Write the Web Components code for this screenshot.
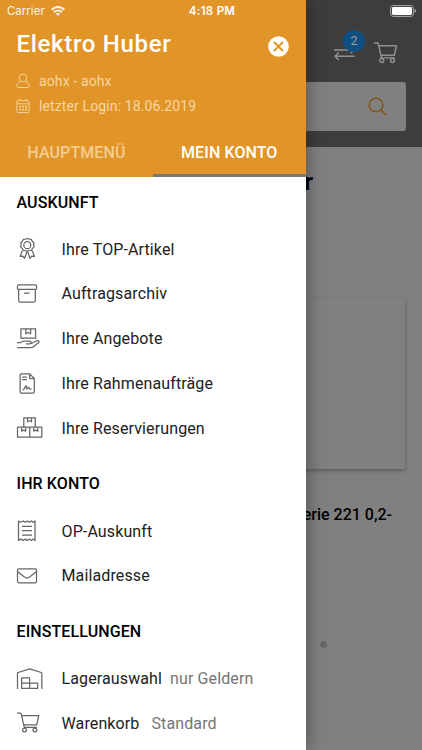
<!DOCTYPE html>
<html lang="de">
<head>
<meta charset="utf-8">
<meta name="viewport" content="width=device-width, initial-scale=1">
<title>Mein Konto</title>
<style>
  body {
    margin: 0;
    overflow: hidden;
    font-family: Roboto, "Liberation Sans", sans-serif;
  }
</style>
</head>
<body>
<account-app></account-app>

<script>
const ICONS = {
  award: `<path d="M10.3 1.5l2 .7 2.1.2.9 1.9 1.6 1.4-.3 2.1.5 2.1-1.6 1.5-1 1.9-2.1.2-2.1.8-2-.8-2.1-.2-1-1.9-1.6-1.5.5-2.1-.3-2.1 1.6-1.4.9-1.9 2.1-.2z"/><circle cx="10.3" cy="8.2" r="3.5"/><path d="M5.3 13.7L3.1 19.4l2.8-.3 1.7 2.2 2.2-6.2M15.3 13.7l2.2 5.7-2.8-.3-1.7 2.2-2.2-6.2"/>`,
  archive: `<rect x=".5" y="2.8" width="19" height="4.6" rx="1"/><path d="M1.7 7.4v11.3q0 1.5 1.5 1.5h13.6q1.5 0 1.5-1.5V7.4M7 11.2h5.5"/>`,
  offer: `<path d="M3.9 1.8h14.7v9.4H3.9zM8.8 1.8v5l2.4-1.3 2.4 1.3v-5"/><path d="M.2 15.6h3.2c1.6-1.2 3-1.6 4.6-1.6h4.6c2 0 2 2.8 0 2.8H9M14.2 16.5l5.5-2.7c1.7-.7 3.2.6 1.7 1.9l-5 4.1c-.8.7-1.5.9-2.5.9H.2"/>`,
  contract: `<path d="M12.7 1.9H4.5q-1.4 0-1.4 1.4v16.5q0 1.4 1.4 1.4h11.4q1.4 0 1.4-1.4V6.5zM12.7 1.9v4.6h4.6M5.3 5h4.6M5.3 7.7h4.6M5.5 17.6h1.2l2.3-4 .9 3.6 1.6-2 1 1.8h2"/>`,
  boxes: `<path d="M6.8 1.9h11.5v9.3H6.8zM.5 11.2h12.3v10H.5zM12.8 11.2h12v10h-12z"/><path d="M10.5 2v3.8l2-1 2 1V2M4.7 11.3v3.8l2-1 2 1v-3.8M16.8 11.3v3.8l2-1 2 1v-3.8"/>`,
  receipt: `<path d="M1.5 2l2.3 1.3L6.2 2l2 1.3L10.3 2l2 1.3 2-1.3 1.8 1.3L18 2v19.4l-1.9-1.3-1.8 1.3-2-1.3-2 1.3-2.1-1.3-2 1.3-2.4-1.3-2.3 1.3zM5 7.3h10M5 11.7h10M5 16h10"/>`,
  mail: `<rect x=".5" y="4.8" width="19" height="14" rx="1.2"/><path d="M.7 7.7l6.7 5.4q2.6 2 5.2 0l6.7-5.4"/>`,
  warehouse: `<path d="M.5 22V6.4q0-.6.6-.9L12.7 1.9l11.5 3.6q.6.3.6.9V22"/><path d="M4.6 10.8h8v5.3h-8zM4.6 16.1h8.1v5.2H4.6zM12.7 16.1h8v5.2h-8z"/>`,
  cart: `<path d="M0 2h3.3q.7 0 .9.8l3.1 13.6h12.6M4.8 4.6h17l-2.1 9.3H6.8"/><circle cx="7.5" cy="18.9" r="1.9"/><circle cx="17.9" cy="18.9" r="1.9"/>`
};

class StatusBar extends HTMLElement {
  constructor() {
    super();
    this.attachShadow({ mode: "open" });
    this.shadowRoot.innerHTML = `
      <style>
        :host {
          display: grid;
          grid-template-columns: 1fr auto 1fr;
          align-items: center;
          height: 22px;
          padding: 0 5px 0 7px;
          color: #fff;
          font: 11.3px/22px Inter, "Liberation Sans", sans-serif;
        }
        .left { display: flex; align-items: center; gap: 6px; opacity: .9; letter-spacing: .1px; }
        .time { font-weight: 600; font-size: 11.5px; letter-spacing: .3px; }
        .battery { justify-self: end; }
        svg { display: block; }
      </style>
      <div class="left">
        <span>Carrier</span>
        <svg width="14" height="10" viewBox="0 0 14 10" fill="none" stroke="#fff" stroke-width="2.1">
          <path d="M.7 3.6q6.3-5.2 12.6 0M3 6.1q4-3.2 8 0"/>
          <path d="M4.9 7.7q2.1-1.6 4.2 0L7 9.9z" fill="#fff" stroke="none"/>
        </svg>
      </div>
      <span class="time">4:18 PM</span>
      <svg class="battery" width="27" height="12" viewBox="0 0 27 12">
        <rect x=".6" y=".6" width="22.8" height="10.8" rx="2.6" fill="none" stroke="#aaa"/>
        <rect x="2" y="2" width="20" height="8" rx="1.4" fill="#fff"/>
        <path d="M24.7 4v4q1.5-.5 1.5-2t-1.5-2z" fill="#aaa"/>
      </svg>
    `;
  }
}

class ShopPage extends HTMLElement {
  constructor() {
    super();
    this.attachShadow({ mode: "open" });
    this.shadowRoot.innerHTML = `
      <style>
        :host {
          display: flex;
          flex-direction: column;
          background: #808080;
          color: #000;
          overflow: hidden;
        }
        header {
          display: flex;
          flex-direction: column;
          align-items: flex-end;
          box-sizing: border-box;
          height: 147px;
          padding: 30px 16.5px 0 0;
          background: #3d3d3d;
        }
        .tools { display: flex; gap: 19px; height: 52px; padding-right: 8px; }
        .compare { position: relative; padding-top: 18px; }
        .cart { padding-top: 11px; }
        .badge {
          position: absolute;
          left: 9.5px;
          top: 0;
          width: 22px;
          height: 22px;
          border-radius: 50%;
          background: #104f82;
          color: #a0a0a0;
          font-size: 12.5px;
          line-height: 22px;
          text-align: center;
        }
        .search {
          display: flex;
          align-items: center;
          justify-content: flex-end;
          box-sizing: border-box;
          width: 389px;
          height: 49px;
          padding-right: 19px;
          border-radius: 3px;
          background: #808080;
        }
        h1 {
          margin: 19px 109px 0 0;
          font-size: 24px;
          line-height: 32px;
          font-weight: 700;
          text-align: right;
        }
        .card {
          width: 389px;
          height: 171px;
          margin: 100px 0 0 16px;
          border-radius: 2px;
          box-shadow: 0 2px 4px rgba(0, 0, 0, .28);
          background: #808080;
        }
        .product {
          margin: 34px 30px 0 0;
          font-size: 16px;
          line-height: 24px;
          font-weight: 500;
          text-align: right;
        }
        .dot {
          width: 7px;
          height: 7px;
          margin: 114px 0 0 320px;
          border-radius: 50%;
          background: #686868;
        }
        svg { display: block; fill: none; stroke: #929292; stroke-width: 1.4; stroke-linejoin: round; }
        .search svg { stroke: #80500f; }
      </style>
      <header>
        <div class="tools">
          <div class="compare">
            <svg width="21" height="14" viewBox="0 0 21 14">
              <path d="M0 2h20M16.5-1.7L20 2l-3.2 3.3M20.5 8.3H1M4.8 4.5L1 8.3l3.8 3.8"/>
            </svg>
            <span class="badge">2</span>
          </div>
          <div class="cart">
            <svg width="24" height="24" viewBox="0 0 23.3 23.3">${ICONS.cart}</svg>
          </div>
        </div>
        <div class="search">
          <svg width="19" height="19" viewBox="0 0 19 19"><circle cx="8" cy="8" r="6.9"/><path d="M12.9 12.9l5.1 5"/></svg>
        </div>
      </header>
      <h1>r</h1>
      <div class="card"></div>
      <div class="product">erie 221 0,2-</div>
      <div class="dot"></div>
    `;
  }
}

class DrawerHeader extends HTMLElement {
  constructor() {
    super();
    this.attachShadow({ mode: "open" });
    this.shadowRoot.innerHTML = `
      <style>
        :host {
          display: flex;
          flex-direction: column;
          box-sizing: border-box;
          height: 176.5px;
          padding-top: 27px;
          background: #e19528;
          color: #fff;
        }
        .top { display: flex; align-items: center; justify-content: space-between; padding: 0 17px 0 16.5px; height: 34px; }
        h2 { margin: 0; font-size: 24px; line-height: 32px; font-weight: 500; letter-spacing: .68px; }
        .close { padding-top: 5px; }
        .info {
          display: flex;
          align-items: center;
          gap: 9px;
          height: 25.5px;
          padding-left: 16px;
          color: #f8d6a1;
          font-size: 14px;
          letter-spacing: .12px;
        }
        .user { margin-top: 7px; }
        .tabs { display: grid; grid-template-columns: 1fr 1fr; flex: 1; margin-top: 9.5px; }
        .tab {
          display: flex;
          align-items: center;
          justify-content: center;
          padding-top: 3px;
          border-bottom: 3px solid transparent;
          color: #f5cc91;
          font-size: 16px;
          font-weight: 500;
          letter-spacing: .1px;
        }
        .active { color: #fff; border-color: #777; }
        svg { display: block; fill: none; stroke: #f6cf96; }
      </style>
      <div class="top">
        <h2><slot name="name"></slot></h2>
        <svg class="close" width="21" height="21" viewBox="0 0 21 21">
          <circle cx="10.5" cy="10.5" r="10.3" fill="#fff" stroke="none"/>
          <path d="M6.5 6.5l8 8M14.5 6.5l-8 8" stroke="#e19528" stroke-width="1.9" stroke-linecap="round"/>
        </svg>
      </div>
      <div class="info user">
        <svg width="14" height="16" viewBox="0 0 14 16"><circle cx="7" cy="5" r="3.9"/><path d="M4.2 8.5Q.8 9.7.8 12.8q0 1.7 1.4 1.7h9.6q1.4 0 1.4-1.7 0-3.1-3.4-4.3"/></svg>
        <slot name="user"></slot>
      </div>
      <div class="info">
        <svg width="14" height="16" viewBox="0 0 14 16"><rect x=".8" y="2.6" width="12.2" height="11.9" rx="1"/><path d="M.8 5.8H13M3.8.5v2.3M10 .5v2.3"/><path d="M3 8.6h8M3 11.6h8" stroke-width="1.8" stroke-dasharray="2 1"/></svg>
        <slot name="login"></slot>
      </div>
      <div class="tabs">
        <div class="tab">HAUPTMENÜ</div>
        <div class="tab active">MEIN KONTO</div>
      </div>
    `;
  }
}

class MenuSection extends HTMLElement {
  constructor() {
    super();
    this.attachShadow({ mode: "open" });
    this.shadowRoot.innerHTML = `
      <style>
        :host { display: block; margin-bottom: 7.6px; }
        h3 {
          margin: 0;
          padding: 2px 0 0 16.5px;
          color: #000;
          font-size: 16px;
          line-height: 48.3px;
          font-weight: 500;
          letter-spacing: .1px;
        }
      </style>
      <h3>${this.getAttribute("heading")}</h3>
      <slot></slot>
    `;
  }
}

class MenuItem extends HTMLElement {
  constructor() {
    super();
    this.attachShadow({ mode: "open" });
    this.shadowRoot.innerHTML = `
      <style>
        :host {
          display: grid;
          grid-template-columns: 45px auto auto;
          justify-content: start;
          align-items: center;
          height: 44.8px;
          padding-left: 16.5px;
          color: #212121;
          font-size: 16px;
          letter-spacing: .12px;
        }
        svg { display: block; fill: none; stroke: #666; stroke-width: 1.25; stroke-linejoin: round; overflow: visible; }
        ::slotted([slot="value"]) { margin-left: 8px; color: #757575; }
      </style>
      <svg width="26" height="24" viewBox="0 0 26 24">${ICONS[this.getAttribute("icon")]}</svg>
      <span><slot></slot></span>
      <slot name="value"></slot>
    `;
  }
}

class AccountApp extends HTMLElement {
  constructor() {
    super();
    this.attachShadow({ mode: "open" });
    this.shadowRoot.innerHTML = `
      <style>
        :host {
          display: grid;
          grid-template: 750px / 422px;
          overflow: hidden;
        }
        shop-page, aside, status-bar { grid-area: 1 / 1; }
        aside {
          width: 305.7px;
          background: #fff;
          box-shadow: 0 0 18px rgba(0, 0, 0, .4);
          overflow: hidden;
          z-index: 1;
        }
        status-bar { z-index: 2; align-self: start; }
        .wide { margin-left: 12px; }
      </style>
      <shop-page></shop-page>
      <aside>
        <drawer-header>
          <span slot="name">Elektro Huber</span>
          <span slot="user">aohx - aohx</span>
          <span slot="login">letzter Login: 18.06.2019</span>
        </drawer-header>
        <menu-section heading="AUSKUNFT">
          <menu-item icon="award">Ihre TOP-Artikel</menu-item>
          <menu-item icon="archive">Auftragsarchiv</menu-item>
          <menu-item icon="offer">Ihre Angebote</menu-item>
          <menu-item icon="contract">Ihre Rahmenaufträge</menu-item>
          <menu-item icon="boxes">Ihre Reservierungen</menu-item>
        </menu-section>
        <menu-section heading="IHR KONTO">
          <menu-item icon="receipt">OP-Auskunft</menu-item>
          <menu-item icon="mail">Mailadresse</menu-item>
        </menu-section>
        <menu-section heading="EINSTELLUNGEN">
          <menu-item icon="warehouse">Lagerauswahl<span slot="value">nur Geldern</span></menu-item>
          <menu-item icon="cart">Warenkorb<span slot="value" class="wide">Standard</span></menu-item>
        </menu-section>
      </aside>
      <status-bar></status-bar>
    `;
  }
}

customElements.define("status-bar", StatusBar);
customElements.define("shop-page", ShopPage);
customElements.define("drawer-header", DrawerHeader);
customElements.define("menu-section", MenuSection);
customElements.define("menu-item", MenuItem);
customElements.define("account-app", AccountApp);
</script>
</body>
</html>
